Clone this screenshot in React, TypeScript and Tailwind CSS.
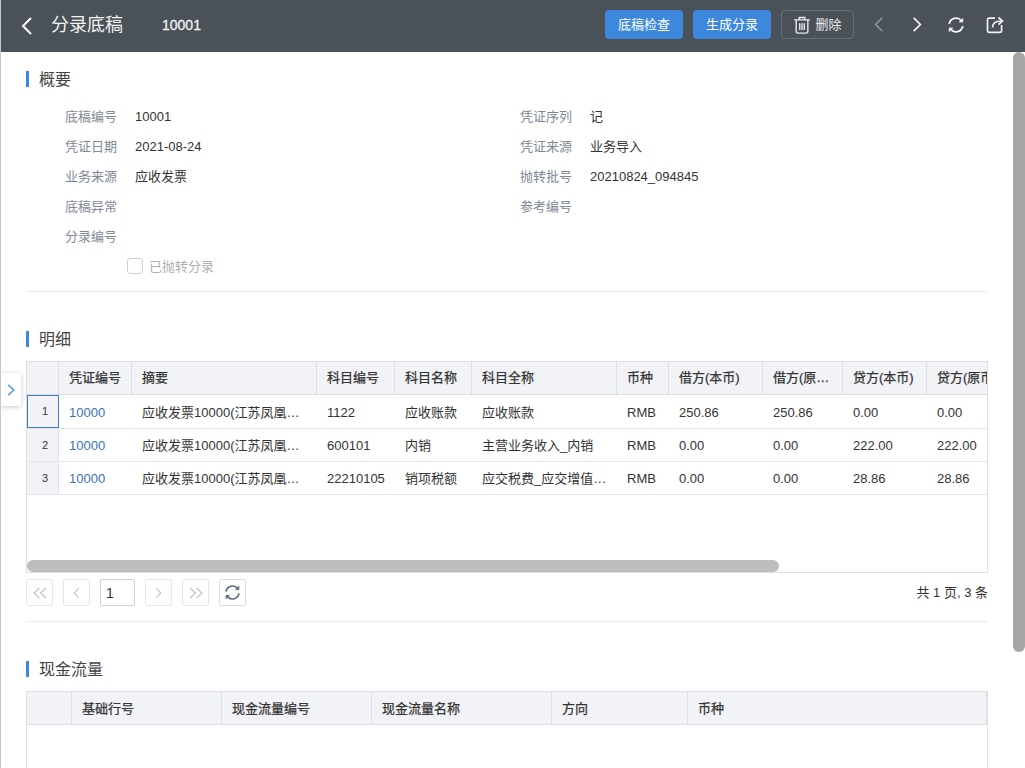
import * as React from "react";

const font = "font-['Liberation_Sans','Noto_Sans_CJK_SC',sans-serif]";

const summary = [
  ["底稿编号", "10001", "凭证序列", "记"],
  ["凭证日期", "2021-08-24", "凭证来源", "业务导入"],
  ["业务来源", "应收发票", "抛转批号", "20210824_094845"],
  ["底稿异常", "", "参考编号", ""],
  ["分录编号", "", "", ""],
];

const detailCols = [
  { title: "凭证编号", width: "w-[73px]" },
  { title: "摘要", width: "w-[185px]" },
  { title: "科目编号", width: "w-[78px]" },
  { title: "科目名称", width: "w-[77px]" },
  { title: "科目全称", width: "w-[145px]" },
  { title: "币种", width: "w-[52px]" },
  { title: "借方(本币)", width: "w-[94px]" },
  { title: "借方(原币)", width: "w-[80px]" },
  { title: "贷方(本币)", width: "w-[84px]" },
  { title: "贷方(原币)", width: "w-[100px]" },
];

const memo = "应收发票10000(江苏凤凰传媒股份有限公司)";

const detailRows = [
  { height: "h-[34px] pt-[1px]", cells: ["10000", memo, "1122", "应收账款", "应收账款", "RMB", "250.86", "250.86", "0.00", "0.00"] },
  { height: "h-[33px]", cells: ["10000", memo, "600101", "内销", "主营业务收入_内销", "RMB", "0.00", "0.00", "222.00", "222.00"] },
  { height: "h-[33px]", cells: ["10000", memo, "22210105", "销项税额", "应交税费_应交增值税_销项税额", "RMB", "0.00", "0.00", "28.86", "28.86"] },
];

const cashCols = [
  { title: "基础行号", width: "w-[150px]" },
  { title: "现金流量编号", width: "w-[150px]" },
  { title: "现金流量名称", width: "w-[180px]" },
  { title: "方向", width: "w-[136px]" },
  { title: "币种", width: "w-[299px]" },
];

function Chevron({ dir, className }: { dir: "left" | "right"; className?: string }) {
  return (
    <svg viewBox="0 0 12 20" fill="none" stroke="currentColor" strokeWidth={2} className={className}>
      <path d={dir === "left" ? "M10 2 2 10l8 8" : "M2 2l8 8-8 8"} />
    </svg>
  );
}

function DoubleChevron({ dir }: { dir: "left" | "right" }) {
  return (
    <svg viewBox="0 0 16 12" fill="none" stroke="currentColor" strokeWidth={1.3} className="w-4 h-3">
      <path d={dir === "left" ? "M7.5 1 2 6l5.5 5M14 1 8.500 6l5.500 5" : "M2 1l5.500 5L2 11M8.500 1 14 6l-5.500 5"} />
    </svg>
  );
}

function RefreshIcon({ className }: { className?: string }) {
  return (
    <svg viewBox="0 0 18 18" fill="none" stroke="currentColor" strokeWidth={1.8} className={className}>
      <path d="M2.200 8A7 7 0 0 1 14.400 4.600" />
      <path d="M15.800 10A7 7 0 0 1 3.600 13.400" />
      <path d="M15.800 2.200v3.800H12" fill="currentColor" strokeWidth={0.8} />
      <path d="M2.200 15.800V12H6" fill="currentColor" strokeWidth={0.8} />
    </svg>
  );
}

function SectionTitle({ children }: { children: React.ReactNode }) {
  return (
    <div className="flex items-center h-4 gap-[10px]">
      <span className="w-[3px] h-4 bg-[#3d88dd]" />
      <span className="text-base leading-4 pt-[1px] text-[#444]">{children}</span>
    </div>
  );
}

function PagerButton({ children }: { children: React.ReactNode }) {
  return (
    <button className="flex items-center justify-center w-[27px] h-[27px] border border-[#e6e6e6] rounded-[2px] text-[#c6c6c6]">
      {children}
    </button>
  );
}

export default function App() {
  return (
    <div className={`${font} relative w-[1025px] h-[768px] overflow-hidden bg-white text-[13px] text-[#333] flex flex-col border-l border-[#c8c8c8]`}>
      {/* Top bar */}
      <header className="flex items-center h-[52px] shrink-0 bg-[#4a5159] text-white">
        <Chevron dir="left" className="w-3 h-5 ml-5" />
        <span className="ml-[18px] mb-[2px] text-lg text-[#f2f2f2]">分录底稿</span>
        <span className="ml-[39px] mb-[2px] text-sm text-[#f2f2f2] [-webkit-text-stroke:0.3px]">10001</span>
        <div className="ml-auto pb-[3px] flex items-center">
          <button className="w-[78px] h-[29px] rounded-[4px] bg-[#3d88dd] text-[13px] text-white">底稿检查</button>
          <button className="ml-[10px] w-[78px] h-[29px] rounded-[4px] bg-[#3d88dd] text-[13px] text-white">生成分录</button>
          <button className="ml-[10px] w-[73px] h-[29px] rounded-[4px] border border-[#646f7b] flex items-center justify-center gap-[4px] text-[13px] text-[#ececec]">
            <svg viewBox="0 0 16 16" fill="none" stroke="currentColor" strokeWidth={1.2} className="w-[18px] h-[18px]">
              <path d="M1 3.500h14M5.500 3.500V1.300h5v2.200M2.800 3.500v10.200a1.500 1.500 0 0 0 1.500 1.500h7.400a1.500 1.500 0 0 0 1.500-1.500V3.500M6 6.500v6M8 6.500v6M10 6.500v6" />
            </svg>
            删除
          </button>
          <Chevron dir="left" className="ml-[20px] w-[10px] h-[17px] text-[#8b9197]" />
          <Chevron dir="right" className="ml-[28px] w-[10px] h-[17px] text-[#f2f2f2]" />
          <RefreshIcon className="ml-[25px] w-[18px] h-[18px] text-[#f2f2f2]" />
          <svg viewBox="0 0 18 18" fill="none" stroke="currentColor" strokeWidth={1.7} className="ml-[21px] mr-[21px] w-[18px] h-[18px] text-[#f2f2f2]">
            <path d="M9 2.200H3a1.500 1.500 0 0 0-1.500 1.500v11.100a1.500 1.500 0 0 0 1.500 1.500h11.100a1.500 1.500 0 0 0 1.500-1.500V9" />
            <path d="M6.500 11.500c0-4 2.500-6.500 9-6.500" />
            <path d="M12.500 1.500 16.500 5l-4 3.500" fill="none" />
          </svg>
        </div>
      </header>

      {/* Content */}
      <main className="ml-[25px] w-[962px] pt-[19px]">
        <SectionTitle>概要</SectionTitle>
        <div className="mt-[14px]">
          {summary.map((row) => (
            <div key={row[0]} className="flex items-center h-[30px] pt-[1px]">
              <span className="w-[91px] text-right text-[#7f8896]">{row[0]}</span>
              <span className="ml-[18px] w-[385px]">{row[1]}</span>
              <span className="w-[70px] -ml-[18px] text-right text-[#7f8896]">{row[2]}</span>
              <span className="ml-[18px]">{row[3]}</span>
            </div>
          ))}
          <div className="flex items-center h-[30px] pl-[101px]">
            <span className="w-4 h-4 border border-[#cfcfcf] rounded-[3px]" />
            <span className="ml-[6px] pt-[1px] text-[#b0b0b0]">已抛转分录</span>
          </div>
        </div>
        <div className="mt-[10px] border-t border-[#ececec]" />

        <div className="mt-[39px]">
          <SectionTitle>明细</SectionTitle>
        </div>
        <div className="relative mt-[14px] h-[212px] overflow-hidden border border-[#dcdfe6]">
          <div className="flex h-[33px] bg-[#f2f3f7] border-b border-[#dcdfe6]">
            <div className="w-[32px] shrink-0 border-r border-[#dcdfe6]" />
            {detailCols.map((col) => (
              <div key={col.title} className={`${col.width} shrink-0 px-[10px] flex items-center border-r border-[#dcdfe6] [-webkit-text-stroke:0.25px]`}>
                <span className="truncate">{col.title}</span>
              </div>
            ))}
          </div>
          {detailRows.map((row, i) => (
            <div key={i} className={`flex h-[33px] border-b border-[#e3e5ea] ${row.height}`}>
              <div className={`w-[32px] shrink-0 flex items-center justify-end pr-[10px] text-[11px] bg-[#f2f3f7] border ${i === 0 ? "border-[#3d80d0] -mt-[1px]" : "border-transparent border-r-[#dcdfe6]"}`}>
                {i + 1}
              </div>
              {row.cells.map((cell, j) => (
                <div key={j} className={`${detailCols[j].width} shrink-0 pl-[10px] pr-[8px] pt-[1px] flex items-center`}>
                  <span className={`truncate ${j === 0 ? "text-[#3a72b5]" : ""}`}>{cell}</span>
                </div>
              ))}
            </div>
          ))}
          <div className="absolute left-0 bottom-0 w-[752px] h-3 rounded-full bg-[#bdbdbd]" />
        </div>

        {/* Pager */}
        <div className="mt-[6px] flex items-center h-[27px]">
          <PagerButton><DoubleChevron dir="left" /></PagerButton>
          <div className="ml-[10px]">
            <PagerButton><Chevron dir="left" className="w-[7px] h-3" /></PagerButton>
          </div>
          <input readOnly value="1" className="ml-[10px] w-[35px] h-[27px] border border-[#d0d0d0] rounded-[2px] pl-[5px] text-sm text-[#333] outline-none" />
          <div className="ml-[10px]">
            <PagerButton><Chevron dir="right" className="w-[7px] h-3" /></PagerButton>
          </div>
          <div className="ml-[10px]">
            <PagerButton><DoubleChevron dir="right" /></PagerButton>
          </div>
          <button className="ml-[10px] flex items-center justify-center w-[27px] h-[27px] border border-[#dcdcdc] rounded-[2px] text-[#5b6b85]">
            <RefreshIcon className="w-[17px] h-[17px]" />
          </button>
          <span className="ml-auto">共 1 页, 3 条</span>
        </div>
        <div className="mt-[15px] border-t border-[#ececec]" />

        <div className="mt-[39px]">
          <SectionTitle>现金流量</SectionTitle>
        </div>
        <div className="mt-[14px] h-[200px] border border-[#dcdfe6] overflow-hidden">
          <div className="flex h-[33px] bg-[#f2f3f7] border-b border-[#dcdfe6]">
            <div className="w-[45px] shrink-0 border-r border-[#dcdfe6]" />
            {cashCols.map((col) => (
              <div key={col.title} className={`${col.width} shrink-0 px-[10px] pt-[1px] flex items-center border-r border-[#dcdfe6] [-webkit-text-stroke:0.25px]`}>
                {col.title}
              </div>
            ))}
          </div>
        </div>
      </main>

      {/* Side drawer toggle */}
      <button className="absolute left-0 top-[373px] w-5 h-[33px] bg-white rounded-r-[3px] shadow-[0_1px_5px_rgba(0,0,0,0.22)] flex items-center justify-center text-[#4a90e2]">
        <Chevron dir="right" className="w-2 h-[14px]" />
      </button>

      {/* Page scrollbar */}
      <div className="absolute right-0 top-[52px] w-3 h-[600px] rounded-full bg-[#a6a6a6]" />
    </div>
  );
}
